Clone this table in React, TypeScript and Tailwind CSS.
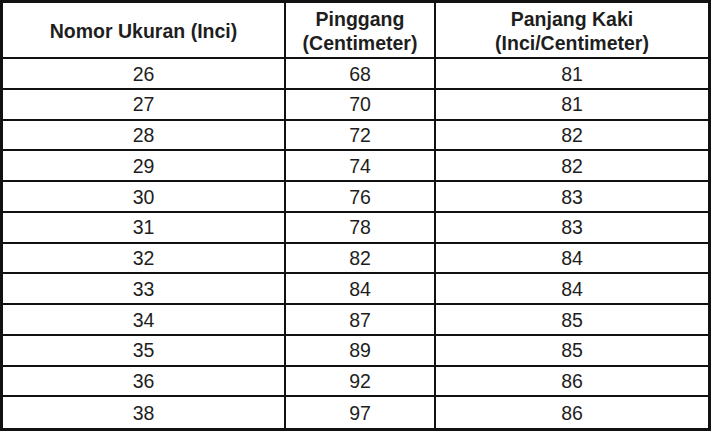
import React from 'react';

const rows: [string, string, string][] = [
  ['26', '68', '81'],
  ['27', '70', '81'],
  ['28', '72', '82'],
  ['29', '74', '82'],
  ['30', '76', '83'],
  ['31', '78', '83'],
  ['32', '82', '84'],
  ['33', '84', '84'],
  ['34', '87', '85'],
  ['35', '89', '85'],
  ['36', '92', '86'],
  ['38', '97', '86'],
];

const cols = 'grid grid-cols-[283px_150px_272px]';

const App: React.FC = () => {
  return (
    <div
      className="w-[711px] h-[431px] bg-white border-[3px] border-[#111] flex flex-col text-[#1e1e1e] text-[19.5px] overflow-hidden"
      style={{ fontFamily: '"Liberation Sans", Arial, sans-serif' }}
    >
      {/* header */}
      <div className={`${cols} h-[56px] shrink-0 border-b-2 border-[#111] font-bold leading-[24px]`}>
        <div className="flex items-center justify-center text-center pt-[1px] border-r-2 border-[#111]">
          Nomor Ukuran (Inci)
        </div>
        <div className="flex items-center justify-center text-center pt-[1px] border-r-2 border-[#111]">
          Pinggang
          <br />
          (Centimeter)
        </div>
        <div className="flex items-center justify-center text-center pt-[1px]">
          Panjang Kaki
          <br />
          (Inci/Centimeter)
        </div>
      </div>

      {/* body */}
      <div className="flex-1 min-h-0 grid grid-rows-[repeat(12,minmax(0,1fr))] leading-none">
        {rows.map((r, i) => (
          <div
            key={i}
            className={`${cols} min-h-0 ${i < rows.length - 1 ? 'border-b-2 border-[#111]' : ''}`}
          >
            <div className="flex items-center justify-center pt-[2px] border-r-2 border-[#111]">{r[0]}</div>
            <div className="flex items-center justify-center pt-[2px] border-r-2 border-[#111]">{r[1]}</div>
            <div className="flex items-center justify-center pt-[2px]">{r[2]}</div>
          </div>
        ))}
      </div>
    </div>
  );
};

export default App;
